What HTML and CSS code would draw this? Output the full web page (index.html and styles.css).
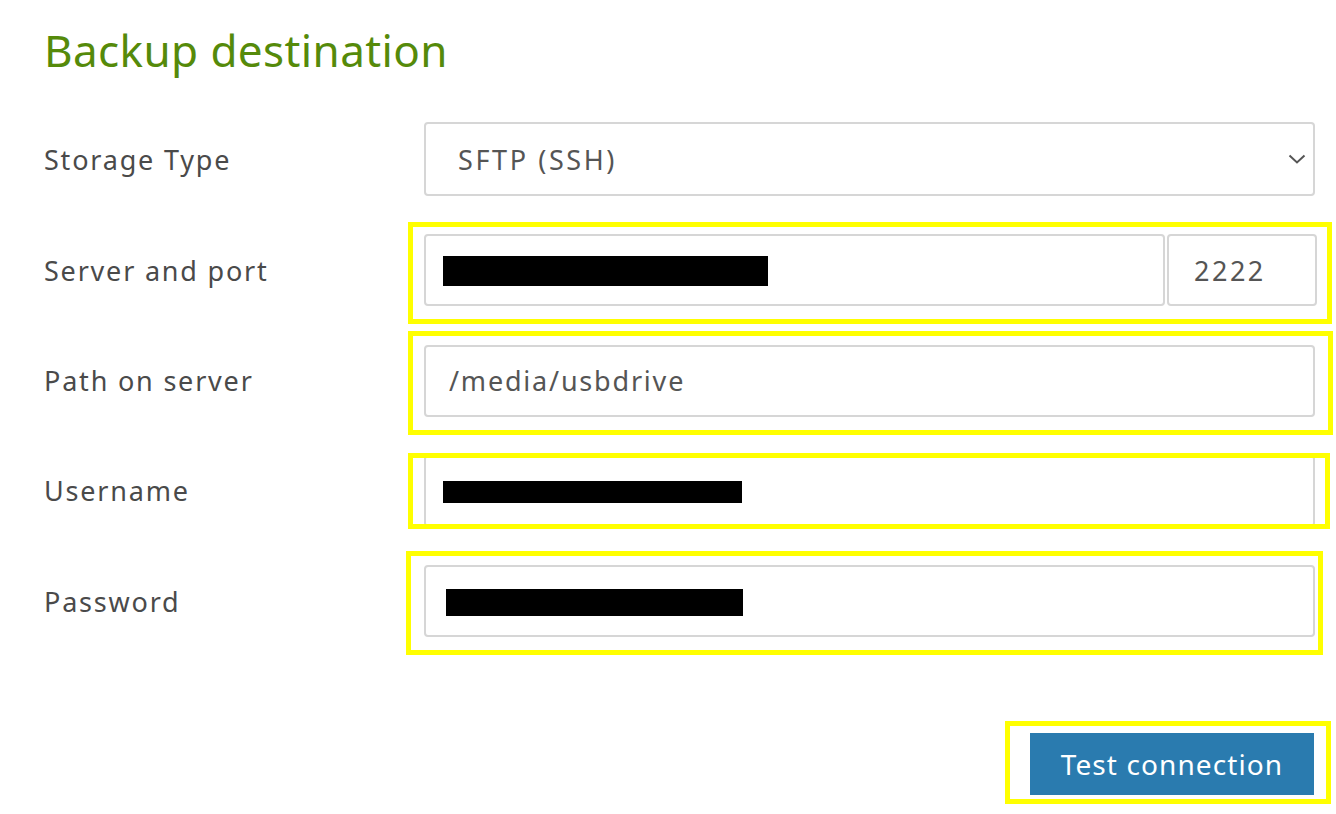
FILE: index.html
```html
<!DOCTYPE html>
<html lang="en">
<head>
<meta charset="utf-8">
<title>Backup destination</title>
<link rel="stylesheet" href="styles.css">
</head>
<body>
<main class="page">
  <h1 class="title">Backup destination</h1>
  <div class="form">
    <div class="label">Storage Type</div>
    <div class="select">
      <span class="value sel-value">SFTP (SSH)</span>
      <svg class="chev" width="18" height="12" viewBox="0 0 18 12"><polyline points="1.5,2.5 9,9.5 16.5,2.5" fill="none" stroke="#555" stroke-width="2"/></svg>
    </div>

    <div class="label">Server and port</div>
    <div class="server-row">
      <div class="input grow"><span class="redact r-server"></span></div>
      <div class="input port"><span class="value">2222</span></div>
    </div>

    <div class="label">Path on server</div>
    <div class="input"><span class="value path">/media/usbdrive</span></div>

    <div class="label">Username</div>
    <div class="input"><span class="redact r-user"></span></div>

    <div class="label">Password</div>
    <div class="input"><span class="redact r-pass"></span></div>
  </div>
  <div class="actions">
    <button class="btn">Test connection</button>
  </div>

  <div class="mark m1"></div>
  <div class="mark m2"></div>
  <div class="mark m3"></div>
  <div class="mark m4"></div>
  <div class="mark m5"></div>
</main>
</body>
</html>
```
FILE: styles.css
```css
* { box-sizing: border-box; }
html, body { margin: 0; padding: 0; background: #fff; }
body {
  font-family: "Noto Sans", "Open Sans", sans-serif;
  color: #4a4a4a;
  width: 1336px;
  height: 814px;
  overflow: hidden;
}
.page {
  position: relative;
  padding: 20px 21px 0 44px;
}
.title {
  margin: 0;
  font-size: 44px;
  font-weight: 400;
  line-height: 60px;
  letter-spacing: 0.4px;
  color: #558a0a;
}
.form {
  margin-top: 42px;
  display: grid;
  grid-template-columns: 380px 891px;
  grid-template-rows: 74px repeat(4, 72px);
  row-gap: 38.3px;
  align-items: center;
}
.label {
  font-size: 27px;
  letter-spacing: 1.8px;
  color: #4a4a4a;
}
.select, .input {
  height: 72px;
  border: 2px solid #d6d6d6;
  border-radius: 4px;
  background: #fff;
  display: flex;
  align-items: center;
  font-size: 27px;
  color: #555;
}
.value { letter-spacing: 1.8px; }
.select { height: 74px; padding: 0 7px 0 32px; justify-content: space-between; }
.sel-value { letter-spacing: 2.6px; }
.input { padding: 0 17px; }
.server-row {
  display: flex;
  gap: 2px;
  width: 893px;
}
.grow { flex: 1; }
.port { width: 150px; padding-left: 25px; }
.port .value { letter-spacing: 2.5px; }
.path { margin-left: 6px; }
.redact { display: block; background: #000; }
.r-server { width: 325px; height: 30px; margin-top: 2px; }
.r-user { width: 299px; height: 22px; margin-top: 2px; }
.r-pass { width: 297px; height: 27px; margin-left: 3px; margin-top: 2px; }
.actions {
  display: flex;
  justify-content: flex-end;
  margin-top: 96px;
  padding-right: 1px;
}
.btn {
  width: 284px;
  height: 62px;
  border: 0;
  border-radius: 0;
  background: #2a7baf;
  color: #fff;
  font-family: inherit;
  font-size: 28px;
  letter-spacing: 1.1px;
  padding: 0;
}
.mark {
  position: absolute;
  border: 5px solid #ffff00;
  pointer-events: none;
}
.m1 { left: 408px; top: 222px; width: 924px; height: 102px; }
.m2 { left: 408px; top: 331px; width: 925px; height: 104px; }
.m3 { left: 408px; top: 453px; width: 922px; height: 76px; }
.m4 { left: 406px; top: 551px; width: 917px; height: 104px; }
.m5 { left: 1005px; top: 721px; width: 326px; height: 83px; }
```
